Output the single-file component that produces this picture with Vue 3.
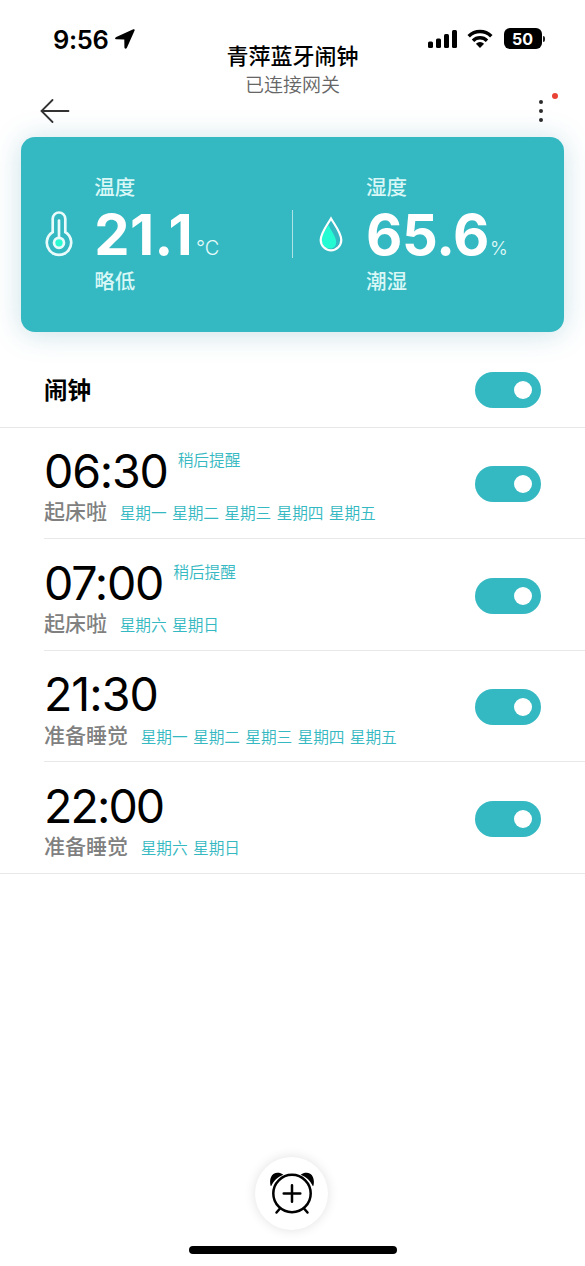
<script setup>
import { ref } from 'vue'

const enabled = ref(true)
const alarms = ref([
  { time: '06:30', kind: 'a', snooze: true, name: '起床啦', days: '星期一 星期二 星期三 星期四 星期五', on: true },
  { time: '07:00', kind: 'b', snooze: true, name: '起床啦', days: '星期六 星期日', on: true },
  { time: '21:30', kind: 'c', snooze: false, name: '准备睡觉', days: '星期一 星期二 星期三 星期四 星期五', on: true },
  { time: '22:00', kind: 'd', snooze: false, name: '准备睡觉', days: '星期六 星期日', on: true },
])
</script>

<template>
  <div class="screen">
    <header class="top">
      <div class="status-left">
        <span class="clock">9:56</span>
        <svg class="loc" viewBox="0 0 20 20"><path d="M18.300 .3 1.300 7.900C-.5 8.800-.2 10.300 1.500 10.300L8.900 10.400c.3 0 .4.1.4.4l.1 7.300c0 1.900 1.700 2.300 2.500.6L19.600 1.600c.3-.9-.4-1.700-1.300-1.300z" /></svg>
      </div>
      <div class="titles">
        <h1>青萍蓝牙闹钟</h1>
        <p>已连接网关</p>
      </div>
      <div class="status-right">
        <svg class="signal" viewBox="0 0 30 20">
          <rect x="0" y="12.500" width="5" height="6.500" rx="1.500" /><rect x="8" y="9.500" width="5" height="9.500" rx="1.500" /><rect x="16" y="5" width="5" height="14" rx="1.500" /><rect x="24" y="1" width="5" height="18" rx="1.500" />
        </svg>
        <svg class="wifi" viewBox="0 0 26 20">
          <path d="M1.700 7.200a16 16 0 0 1 22.600 0M6 11.700a10 10 0 0 1 14 0" />
          <path class="solid" d="M8.900 14.700a6 6 0 0 1 8.200 0L13 19z" />
        </svg>
        <div class="battery"><span>50</span></div>
        <i class="nub"></i>
      </div>
    </header>

    <nav class="nav">
      <svg class="back" viewBox="0 0 30 24"><path d="M28.500 12H1.500M12.500 1 1.500 12 12.500 23" /></svg>
      <div class="more"><i></i><i></i><i></i><b></b></div>
    </nav>

    <section class="card">
      <div class="metric temp">
        <svg class="thermo" viewBox="0 0 28 46">
          <path d="M7.700 21.200V7.800a6.300 6.300 0 0 1 12.600 0V21.200a12.200 12.200 0 1 1-12.600 0z" />
          <path d="M14 9.500V26" />
          <circle class="dot" cx="14" cy="31.800" r="5" />
        </svg>
        <div class="reading">
          <span class="label">温度</span>
          <div class="value"><strong class="t">21.1</strong><small class="deg">°C</small></div>
          <span class="label">略低</span>
        </div>
      </div>
      <div class="divider"></div>
      <div class="metric hum">
        <svg class="drop" viewBox="0 0 24 36">
          <path class="fill" d="M9.700 9C6 14 2.300 19 2.500 24c.3 5.300 4.300 8.600 8.600 8.600 4.200 0 6.500-3.200 6-7.600C16.700 20.200 11.500 14 9.700 9z" />
          <path class="line" d="M12 2.500C7.200 10.500 1.700 17.200 1.700 24a10.300 10.300 0 0 0 20.600 0C22.300 17.200 16.800 10.500 12 2.500z" />
        </svg>
        <div class="reading">
          <span class="label">湿度</span>
          <div class="value"><strong>65.6</strong><small>%</small></div>
          <span class="label">潮湿</span>
        </div>
      </div>
    </section>

    <section class="master">
      <h2>闹钟</h2>
      <button class="toggle" :class="{ off: !enabled }" @click="enabled = !enabled"><i></i></button>
    </section>

    <ul class="alarms">
      <li v-for="alarm in alarms" :key="alarm.time">
        <div class="info">
          <div class="line1">
            <span class="time" :class="alarm.kind">{{ alarm.time }}</span>
            <span v-if="alarm.snooze" class="snooze">稍后提醒</span>
          </div>
          <div class="line2">
            <span class="name">{{ alarm.name }}</span>
            <span class="days">{{ alarm.days }}</span>
          </div>
        </div>
        <button class="toggle" :class="{ off: !alarm.on }" @click="alarm.on = !alarm.on"><i></i></button>
      </li>
    </ul>

    <footer>
      <button class="add">
        <svg viewBox="0 0 46 46">
          <circle cx="23" cy="23.500" r="18.700" />
          <path d="M23 15.200v16.600M14.700 23.500h16.600M11 38.500l-3.500 4M35 38.500l3.500 4" />
          <path class="solid" d="M1.600 15.800C-.2 8.500 3 2.800 8.200 2.700c2.500 0 4.700.6 6.200 2.100C8.200 7.400 4.800 10.800 2.400 15.700c-.2.500-.7.500-.8.100zM44.400 15.800C46.200 8.500 43 2.800 37.800 2.700c-2.500 0-4.700.6-6.200 2.100 6.200 2.600 9.600 6 12 10.900.2.500.7.500.8.100z" />
        </svg>
      </button>
      <div class="home"></div>
    </footer>
  </div>
</template>

<style>
html, body { background: #fff; }
</style>

<style scoped>
* { box-sizing: border-box; margin: 0; padding: 0; }
.screen {
  display: flex; flex-direction: column;
  width: 585px; height: 1266px; overflow: hidden; background: #fff; color: #000;
  font-family: "Noto Sans CJK SC", sans-serif;
}
svg { display: block; flex: none; }
button { border: 0; flex: none; }
.top { display: grid; grid-template-columns: 1fr 160px 1fr; height: 97px; }
.status-left { display: flex; align-items: flex-start; padding: 24px 0 0 53px; }
.clock { width: 62px; white-space: nowrap; font: 600 25.500px/31px Inter, sans-serif; letter-spacing: -.3px; }
.loc { width: 20px; height: 20px; margin-top: 5px; }
.titles { text-align: center; padding-top: 38px; }
h1 { font-size: 22px; line-height: 32px; font-weight: 500; white-space: nowrap; }
.titles p { font-size: 19px; line-height: 24px; margin-top: 2px; font-weight: 350; color: #666; }
.status-right { display: flex; align-items: flex-start; padding: 28px 0 0 55px; }
.signal { width: 30px; height: 20px; margin-top: 1px; }
.wifi { width: 26px; height: 20px; margin-left: 9.500px; margin-top: 1px; fill: none; stroke: #000; stroke-width: 3.500; }
.wifi .solid { fill: #000; stroke: none; }
.battery { width: 38px; height: 21px; margin-left: 10.500px; border-radius: 6px; background: #000; color: #fff; text-align: center; font: 700 16px/22px Inter, sans-serif; }
.nub { width: 2px; height: 6px; margin: 8px 0 0 1px; border-radius: 0 2px 2px 0; background: #222; }
.nav { display: flex; justify-content: space-between; height: 39.500px; padding: 2px 41px 0 40px; }
.back { width: 30px; height: 24px; fill: none; stroke: #333; stroke-width: 1.800; stroke-linecap: round; }
.more { position: relative; display: flex; flex-direction: column; gap: 5px; padding-top: 1px; width: 5px; }
.more i { width: 4px; height: 4px; border-radius: 50%; background: #2b2b2b; }
.more b { position: absolute; left: 13px; top: -6px; width: 6px; height: 6px; border-radius: 50%; background: #e94235; }
.card {
  display: flex; width: 542.700px; height: 195px; margin-left: 21.300px;
  border-radius: 14px; background: #34b8c1; color: #fff; flex: none;
  box-shadow: 0 2px 28px rgba(52, 140, 165, .26);
}
.metric { display: flex; padding-top: 35.500px; }
.temp { width: 270.700px; padding-left: 24px; }
.hum { padding-left: 26px; }
.divider { width: 1px; height: 48px; margin-top: 73.500px; background: rgba(255, 255, 255, .6); }
.thermo { width: 28px; height: 46px; margin-top: 38.500px; fill: none; stroke: #e9fbfa; stroke-width: 2.700; stroke-linecap: round; }
.thermo .dot { fill: #2cfbd2; }
.drop { width: 24px; height: 36px; margin-top: 44px; }
.drop .fill { fill: #25fbd2; }
.drop .line { fill: none; stroke: #fff; stroke-width: 2.200; }
.reading { display: flex; flex-direction: column; margin-left: 21px; }
.hum .reading { margin-left: 23px; }
.label { font-size: 20.500px; line-height: 28px; font-weight: 500; color: #d8f7f6; }
.value { display: flex; align-items: baseline; height: 66px; padding-top: 4px; }
.value strong { font: 700 56px/62px Inter, sans-serif; letter-spacing: -.3px; }
.value strong.t { letter-spacing: .4px; }
.value small { font: 300 19px/24px Inter, sans-serif; margin-left: 1px; color: #e5fbfa; }
.value small.deg { margin-left: 3px; font-size: 20px; letter-spacing: -.3px; }
.master { display: flex; justify-content: space-between; align-items: center; height: 96.500px; padding: 20.500px 44px 0; border-bottom: 1px solid #e8e8e8; flex: none; }
h2 { font-size: 23.500px; line-height: 34px; font-weight: 700; margin-top: -2px; }
.toggle { display: flex; justify-content: flex-end; align-items: center; width: 66px; height: 36px; padding-right: 9px; border-radius: 18px; background: #34b8c1; }
.toggle i { width: 18px; height: 18px; border-radius: 50%; background: #fff; }
.toggle.off { justify-content: flex-start; padding: 0 0 0 9px; background: #ccc; }
.alarms { list-style: none; border-bottom: 1px solid #e8e8e8; height: 446px; display: grid; grid-template-rows: 111px 112px 111px 111px; flex: none; }
li { display: flex; justify-content: space-between; margin-left: 44px; padding-right: 44px; border-bottom: 1px solid #e8e8e8; }
li:last-child { border-bottom: 0; }
li .toggle { margin-top: 37.500px; }
li:nth-child(even) { padding-top: 1px; }
li:nth-child(3) .line2 { padding-top: 1px; }
.info { padding-top: 20px; }
.line1 { display: flex; height: 47px; }
.time { font: 400 46.500px/46px Inter, sans-serif; white-space: nowrap; letter-spacing: -1.200px; }
.time.c { letter-spacing: -1px; }
.time.d { letter-spacing: -1.900px; }
.snooze { margin: 2px 0 0 10px; font-size: 15.700px; line-height: 20px; color: #34b8c1; font-weight: 350; }
.line2 { display: flex; align-items: baseline; }
.name { font-size: 21px; line-height: 30px; font-weight: 500; color: #808080; }
.days { margin-left: 12.700px; font-size: 15.700px; line-height: 24px; color: #34b8c1; font-weight: 350; white-space: nowrap; word-spacing: 1.700px; }
footer { display: flex; flex-direction: column; align-items: center; margin-top: auto; height: 109.500px; flex: none; }
.add { display: flex; align-items: center; justify-content: center; width: 73px; height: 73px; margin-right: 1.500px; border-radius: 50%; background: #fff; box-shadow: 0 0 12px rgba(0, 0, 0, .12); }
.add svg { width: 46px; height: 46px; fill: none; stroke: #000; stroke-width: 2.500; stroke-linecap: round; }
.add .solid { fill: #000; stroke: none; }
.home { width: 208px; height: 8px; margin: 16.500px 0 0 1px; border-radius: 4px; background: #000; }
</style>
